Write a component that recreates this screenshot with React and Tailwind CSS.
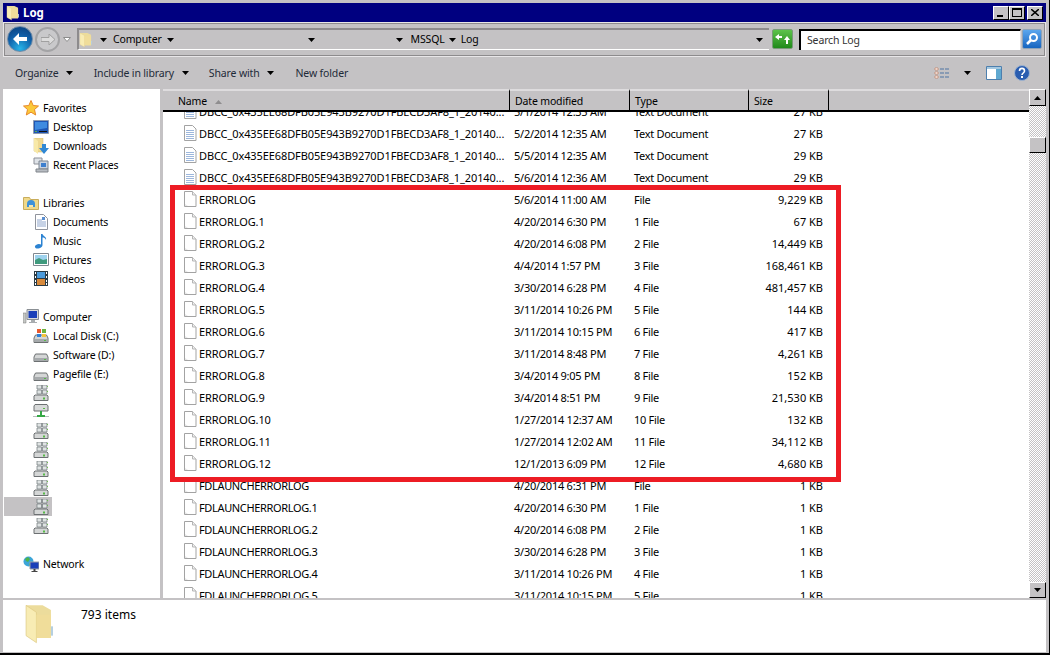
import React from "react";

const Arrow = ({ className = "" }) => (
    <svg width="7" height="4" viewBox="0 0 7 4" className={className}><path d="M0 0h7L3.500 4z" fill="#000" /></svg>
);

const Folder = ({ size = 14, h = 18 }) => (
    <svg width={size} height={h} viewBox="0 0 14 18" preserveAspectRatio="none" className="shrink-0">
        <path d="M1 1h8l4 2v12H3z" fill="#ecdc9c" />
        <path d="M1 1l5 3v13l-5-3z" fill="#f8ecb4" stroke="#dcc77f" strokeWidth=".3" />
        <path d="M6 5h7v10H6z" fill="#f0dd9a" />
        <path d="M13 10h1v4h-1z" fill="#b5cfe0" />
    </svg>
);

const FileIcon = () => (
    <svg width="14" height="16" viewBox="0 0 14 16" className="shrink-0">
        <path d="M1.500.5h8l3.500 3.500v11.500h-11.500z" fill="#fff" stroke="#a3a3a3" />
        <path d="M9.500.5v3.500h3.500" fill="#f0f0f0" stroke="#b5b5b5" />
        <path d="M2 13l3 2H2z" fill="#e6e6e6" />
    </svg>
);

const TextIcon = () => (
    <svg width="14" height="16" viewBox="0 0 14 16" className="shrink-0">
        <path d="M1.500.5h8l3.500 3.500v11.500h-11.500z" fill="#fff" stroke="#a3a3a3" />
        <path d="M3 5.500h8M3 7.500h8M3 9.500h8M3 11.500h8M3 13.500h8" stroke="#9db7dc" />
    </svg>
);

const Star = () => (
    <svg width="16" height="16" viewBox="0 0 16 16"><path d="M8 .5l2.200 5 5.300.500-4 3.500 1.200 5.500L8 12.200 3.300 15l1.200-5.500-4-3.500 5.300-.500z" fill="#fbc93b" stroke="#e8892b" /></svg>
);

const Desktop = () => (
    <svg width="16" height="14" viewBox="0 0 16 14"><path d="M.5.5h15v13H.5z" fill="#1f56b4" stroke="#8d9ab0" /><path d="M2 2h12v6L2 10z" fill="#3f8be0" /><path d="M6 11h8v1H6z" fill="#111" /><path d="M2 11h2v1H2z" fill="#5bb04b" /></svg>
);

const Downloads = () => (
    <svg width="16" height="16" viewBox="0 0 16 16"><path d="M1 0h9v14H4l-3-1z" fill="#eed892" stroke="#cdb66e" strokeWidth=".5" /><path d="M1 0l4 3v13l-4-3z" fill="#f8e9a8" /><path d="M9 6h4v4h3l-5 6-5-6h3z" fill="#2f87d4" /></svg>
);

const RecentPlaces = () => (
    <svg width="16" height="16" viewBox="0 0 16 16"><path d="M1 1h8v6H1z" fill="#dfe3e8" stroke="#8c9098" /><path d="M6 4h9v8H6z" fill="#c9d3e0" stroke="#7d8691" /><path d="M8 6h5v4H8z" fill="#3d7fce" /><path d="M3 12h12v3H3z" fill="#b7bcc2" stroke="#80858b" /></svg>
);

const Libraries = () => (
    <svg width="16" height="14" viewBox="0 0 16 14"><path d="M.5 1.500h6l1 2h8v10H.5z" fill="#f0d98a" stroke="#c9ad5c" /><path d="M4 8a4 4 0 018 0v3H4z" fill="#3f92d8" /><path d="M6 9h4v2H6z" fill="#f4e7b4" /></svg>
);

const Documents = () => (
    <svg width="13" height="16" viewBox="0 0 13 16"><path d="M.5.5h8l4 4v11H.5z" fill="#fff" stroke="#90949c" /><path d="M2 6h5M2 8h9M2 10h9M2 12h9" stroke="#8fa6cc" /><path d="M7 3h3v3H7z" fill="#5a8ed0" /></svg>
);

const Music = () => (
    <svg width="14" height="16" viewBox="0 0 14 16"><path d="M7 1h1.500c.5 2.500 4.500 2.500 3.500 6-.5-2-2.500-2.500-3.500-2.500V12c0 2-2.500 3.500-5 3.500S0 13.500 2 12s4-1 5-.5z" fill="#2c83d2" /></svg>
);

const Pictures = () => (
    <svg width="16" height="13" viewBox="0 0 16 13"><path d="M.5.5h15v12H.5z" fill="#fff" stroke="#808890" /><path d="M2 2h12v5H2z" fill="#9ed2ee" /><path d="M2 7l4-2 4 2 4-1v5H2z" fill="#3f9a7d" /></svg>
);

const Videos = () => (
    <svg width="14" height="15" viewBox="0 0 14 15"><path d="M0 0h14v15H0z" fill="#2b3b45" /><path d="M3 1h8v6H3z" fill="#4b9bdc" /><path d="M3 8h8v6H3z" fill="#d88a3c" /><path d="M1 1h1v2H1zM1 5h1v2H1zM1 9h1v2H1zM1 12h1v2H1zM12 1h1v2h-1zM12 5h1v2h-1zM12 9h1v2h-1zM12 12h1v2h-1z" fill="#fff" /></svg>
);

const Computer = () => (
    <svg width="16" height="15" viewBox="0 0 16 15"><path d="M0 4h3v10H0z" fill="#c6c9c6" stroke="#777" strokeWidth=".5" /><path d="M4 .5h11.500v10H4z" fill="#d7dadc" stroke="#8a8f94" /><path d="M5.500 2h8.500v7H5.500z" fill="#1a3fb8" /><path d="M8 11h4v2h2v1H6v-1h2z" fill="#a9adb0" /></svg>
);

const Drive = ({ windows }) => (
    <svg width="16" height="16" viewBox="0 0 16 16">
        <path d="M1 10l1.500-3h11L15 10v4.500H1z" fill="#d4d6d6" stroke="#6c7072" />
        <path d="M2 11h12v3H2z" fill="#a6aaac" />
        <path d="M11 12h2v1h-2z" fill="#57b948" />
        {windows && <path d="M4 1h4v4H4z" fill="#e9592e" />}
        {windows && <path d="M9 1h4v4H9z" fill="#6cb33f" />}
        {windows && <path d="M4 6h4v3H4z" fill="#2f7fd6" />}
        {windows && <path d="M9 6h4v3H9z" fill="#f5c33b" />}
    </svg>
);

const ServerDrive = () => (
    <svg width="16" height="16" viewBox="0 0 16 16">
        <path d="M4 0h4.500v4H4zM9.500 0H14v4H9.500zM4 5h4.500v4H4zM9.500 5H14v4H9.500z" fill="#dfe3e3" stroke="#6f7678" strokeWidth=".7" />
        <path d="M14 1h1v1h-1zM14 6h1v1h-1z" fill="#6cc04a" />
        <path d="M1 11l1-1h12l1 1v4.500H1z" fill="#d4d6d6" stroke="#6c7072" />
        <path d="M10 12.500h2v2h-2z" fill="#57b948" />
    </svg>
);

const NetDrive = () => (
    <svg width="16" height="16" viewBox="0 0 16 16">
        <path d="M1 2l1-1.500h12L15 2v5H1z" fill="#d8dada" stroke="#6c7072" />
        <path d="M10 4h2v1h-2z" fill="#57b948" />
        <path d="M7 7h2v4h3v2H4v-2h3z" fill="#35a845" />
        <path d="M0 12h4v1H0zM12 12h4v1h-4z" fill="#b7bcbc" />
    </svg>
);

const Network = () => (
    <svg width="16" height="16" viewBox="0 0 16 16"><circle cx="5.500" cy="5.500" r="5" fill="#3ba5d8" /><path d="M2 3l3-2 2 2-2 3-2-1zM7 7l2 1-1 2-2-1z" fill="#4fb34a" /><path d="M7 6h9v7H7z" fill="#1a3fb8" stroke="#9aa0a6" /><path d="M10.500 13h2v2h2v1h-6v-1h2z" fill="#444" /></svg>
);

const sideGroups = [
    { head: ["Favorites", <Star />], items: [["Desktop", <Desktop />], ["Downloads", <Downloads />], ["Recent Places", <RecentPlaces />]] },
    { head: ["Libraries", <Libraries />], items: [["Documents", <Documents />], ["Music", <Music />], ["Pictures", <Pictures />], ["Videos", <Videos />]] },
    {
        head: ["Computer", <Computer />],
        items: [
            ["Local Disk (C:)", <Drive windows />],
            ["Software (D:)", <Drive />],
            ["Pagefile (E:)", <Drive />],
            ["", <ServerDrive />],
            ["", <NetDrive />],
            ["", <ServerDrive />],
            ["", <ServerDrive />],
            ["", <ServerDrive />],
            ["", <ServerDrive />],
            ["", <ServerDrive />, true],
            ["", <ServerDrive />],
        ],
    },
    { head: ["Network", <Network />], items: [] },
];

const dbcc = "DBCC_0x435EE68DFB05E943B9270D1FBECD3AF8_1_20140...";

const files = [
    [dbcc, "5/1/2014 12:35 AM", "Text Document", "27 KB", true],
    [dbcc, "5/2/2014 12:35 AM", "Text Document", "27 KB", true],
    [dbcc, "5/5/2014 12:35 AM", "Text Document", "29 KB", true],
    [dbcc, "5/6/2014 12:36 AM", "Text Document", "29 KB", true],
    ["ERRORLOG", "5/6/2014 11:00 AM", "File", "9,229 KB"],
    ["ERRORLOG.1", "4/20/2014 6:30 PM", "1 File", "67 KB"],
    ["ERRORLOG.2", "4/20/2014 6:08 PM", "2 File", "14,449 KB"],
    ["ERRORLOG.3", "4/4/2014 1:57 PM", "3 File", "168,461 KB"],
    ["ERRORLOG.4", "3/30/2014 6:28 PM", "4 File", "481,457 KB"],
    ["ERRORLOG.5", "3/11/2014 10:26 PM", "5 File", "144 KB"],
    ["ERRORLOG.6", "3/11/2014 10:15 PM", "6 File", "417 KB"],
    ["ERRORLOG.7", "3/11/2014 8:48 PM", "7 File", "4,261 KB"],
    ["ERRORLOG.8", "3/4/2014 9:05 PM", "8 File", "152 KB"],
    ["ERRORLOG.9", "3/4/2014 8:51 PM", "9 File", "21,530 KB"],
    ["ERRORLOG.10", "1/27/2014 12:37 AM", "10 File", "132 KB"],
    ["ERRORLOG.11", "1/27/2014 12:02 AM", "11 File", "34,112 KB"],
    ["ERRORLOG.12", "12/1/2013 6:09 PM", "12 File", "4,680 KB"],
    ["FDLAUNCHERRORLOG", "4/20/2014 6:31 PM", "File", "1 KB"],
    ["FDLAUNCHERRORLOG.1", "4/20/2014 6:30 PM", "1 File", "1 KB"],
    ["FDLAUNCHERRORLOG.2", "4/20/2014 6:08 PM", "2 File", "1 KB"],
    ["FDLAUNCHERRORLOG.3", "3/30/2014 6:28 PM", "3 File", "1 KB"],
    ["FDLAUNCHERRORLOG.4", "3/11/2014 10:26 PM", "4 File", "1 KB"],
    ["FDLAUNCHERRORLOG.5", "3/11/2014 10:15 PM", "5 File", "1 KB"],
];

const raised = "border-t border-l border-t-white border-l-white border-r border-b border-r-black border-b-black";

// Tahoma's lowercase runs narrower than Noto Sans
const narrow = "text-[10.5px] tracking-[-0.15px]";

const WinButton = ({ children, className = "" }) => (
    <div className={`w-[16px] h-[14px] bg-[#c4c2c4] flex items-center justify-center ${raised} ${className}`}>{children}</div>
);

const HeaderCell = ({ label, className = "", children }) => (
    <div className={`h-full flex items-center gap-2 pl-[4px] pt-[2px] border-t-2 border-t-[#dedcde] border-r border-r-black ${narrow} ${className}`}>
        <span>{label}</span>
        {children}
    </div>
);

const SideRow = ({ label, icon, head, selected }) => (
    <div className="h-[19px] flex items-center">
        <div className={`h-[19px] ml-[1px] flex items-center ${head ? "pl-[19px]" : "pl-[29px]"} ${selected ? "bg-[#c4c2c4] w-[48px]" : ""}`}>
            <div className="w-[16px] h-[16px] flex items-center justify-center shrink-0">{icon}</div>
        </div>
        {label && <span className="ml-[4px] pt-[2px]">{label}</span>}
    </div>
);

export default function App() {
    return (
        <div className="relative w-[1050px] h-[655px] overflow-hidden flex flex-col bg-[#c4c2c4] text-[11px] leading-none text-black font-['Noto_Sans',sans-serif] pt-[3px] pl-[3px] pr-[3px] border-r border-b-2 border-black">
            {/* Title bar */}
            <div className="h-[19px] shrink-0 bg-[#000080] flex items-center pl-[3px] pr-[3px] text-white font-bold text-[11.5px]">
                <Folder size={13} h={16} />
                <span className="ml-[4px]">Log</span>
                <div className="ml-auto flex items-center">
                    <WinButton><span className="w-[6px] h-[2px] bg-black mt-[7px] mr-[3px]"></span></WinButton>
                    <WinButton><span className="w-[10px] h-[9px] border border-black border-t-2"></span></WinButton>
                    <WinButton className="ml-[2px]">
                        <svg width="8" height="7" viewBox="0 0 8 7"><path d="M0 0l8 7M8 0L0 7" stroke="#000" strokeWidth="1.500" /></svg>
                    </WinButton>
                </div>
            </div>

            {/* Address bar */}
            <div className={`h-[35px] shrink-0 border border-[#e8e6e8] outline outline-[#8d8b8d] -outline-offset-[2px] flex items-center pb-[1px] pl-[3px] pr-[3px] ${narrow}`}>
                <div className="w-[26px] h-[26px] rounded-full bg-[radial-gradient(circle_at_50%_90%,#27b4e8,#0f5da6_55%,#0a3d78)] border border-[#6e8ba8] flex items-center justify-center shrink-0">
                    <svg width="16" height="12" viewBox="0 0 16 12"><path d="M7 0L1 6l6 6V8h8V4H7z" fill="#fff" /></svg>
                </div>
                <div className="w-[25px] h-[25px] ml-[2px] rounded-full bg-[#c9c9cb] border-2 border-[#a3a3a5] flex items-center justify-center shrink-0">
                    <svg width="14" height="11" viewBox="0 0 14 11"><path d="M8 0l6 5.500L8 11V7.500H0v-4h8z" fill="#dcdcdc" stroke="#a0a0a0" /></svg>
                </div>
                <svg width="8" height="5" viewBox="0 0 8 5" className="ml-[3px] shrink-0"><path d="M.5.5h7L4 4.500z" fill="#fff" stroke="#8c8c8c" /></svg>
                <div className="w-[692px] h-[22px] ml-[6px] flex items-center border-t-2 border-l-2 border-t-[#8d8b8d] border-l-[#8d8b8d] border-b border-b-white shrink-0">
                    <Folder size={13} h={16} />
                    <Arrow className="ml-[8px]" />
                    <span className="ml-[6px]">Computer</span>
                    <Arrow className="ml-[5px]" />
                    <Arrow className="ml-[134px]" />
                    <Arrow className="ml-[81px]" />
                    <span className="ml-[8px]">MSSQL</span>
                    <Arrow className="ml-[4px]" />
                    <span className="ml-[5px]">Log</span>
                    <Arrow className="ml-auto mr-[6px]" />
                </div>
                <div className="w-[21px] h-[20px] ml-[3px] rounded-[2px] bg-gradient-to-b from-[#5cc34a] to-[#1f8a1a] border border-[#7a9a7a] flex items-center justify-center shrink-0">
                    <svg width="15" height="10" viewBox="0 0 15 10"><path d="M0 3l4-3v2h3v2H4v2zM15 6l-3-4-3 4h2v4h2V6z" fill="#fff" /></svg>
                </div>
                <div className="w-[222px] h-[21px] ml-[6px] bg-white border-t-2 border-l-2 border-black border-r border-r-[#dedcde] pl-[6px] flex items-center text-[#333] shrink-0">Search Log</div>
                <div className="w-[20px] h-[20px] ml-[1px] rounded-[2px] bg-gradient-to-b from-[#5aa6ee] to-[#1565c0] border border-[#8fa3b8] flex items-center justify-center shrink-0">
                    <svg width="14" height="14" viewBox="0 0 14 14"><circle cx="8.500" cy="5.500" r="3.500" fill="none" stroke="#fff" strokeWidth="2" /><path d="M6 8l-4 4" stroke="#fff" strokeWidth="2.500" /></svg>
                </div>
            </div>

            {/* Command bar */}
            <div className={`h-[32px] shrink-0 flex items-center pl-[12px] pr-[16px] text-[#1e2a38] ${narrow}`}>
                <span>Organize</span>
                <Arrow className="ml-[7px]" />
                <span className="ml-[21px]">Include in library</span>
                <Arrow className="ml-[8px]" />
                <span className="ml-[20px]">Share with</span>
                <Arrow className="ml-[7px]" />
                <span className="ml-[22px]">New folder</span>
                <svg width="16" height="12" viewBox="0 0 16 12" className="ml-auto">
                    <path d="M1 1h3v2H1zM1 5h3v2H1zM1 9h3v2H1z" fill="#fff" stroke="#c0704d" strokeWidth=".6" />
                    <path d="M6 2h10M6 6h10M6 10h10" stroke="#4f74a3" strokeDasharray="4 1" />
                </svg>
                <Arrow className="ml-[14px]" />
                <svg width="16" height="14" viewBox="0 0 16 14" className="ml-[15px]">
                    <path d="M.5.5h15v13H.5z" fill="#fff" stroke="#4d7fae" />
                    <path d="M1 1h14v2H1z" fill="#a5c8e0" />
                    <path d="M10 3h5v10h-5z" fill="#5fa8d0" />
                </svg>
                <svg width="16" height="16" viewBox="0 0 16 16" className="ml-[12px]">
                    <circle cx="8" cy="8" r="7.500" fill="#2a5db0" stroke="#9db2cf" />
                    <path d="M5.500 6c0-3.500 5-3.500 5 0 0 2-2.500 2-2.500 4" fill="none" stroke="#fff" strokeWidth="1.600" />
                    <path d="M7 11h2v2H7z" fill="#fff" />
                </svg>
            </div>

            {/* Main */}
            <div className="flex-1 min-h-0 flex">
                <div className={`w-[157px] shrink-0 bg-white pt-[9px] overflow-hidden ${narrow}`}>
                    {sideGroups.map((group, i) => (
                        <div key={i} className="mb-[19px]">
                            <SideRow label={group.head[0]} icon={group.head[1]} head />
                            {group.items.map((item, j) => (
                                <SideRow key={j} label={item[0]} icon={item[1]} selected={item[2]} />
                            ))}
                        </div>
                    ))}
                </div>

                <div className="flex-1 min-w-0 ml-[3px] flex flex-col">
                    {/* Column headers + scrollbar */}
                    <div className="flex-1 min-h-0 flex">
                        <div className="flex-1 min-w-0 flex flex-col">
                            <div className="h-[23px] shrink-0 flex border-b-2 border-b-black">
                                <HeaderCell label="Name" className="w-[347px] pl-[15px]">
                                    <svg width="7" height="4" viewBox="0 0 7 4"><path d="M3.500 0L7 4H0z" fill="#8f8d8f" /></svg>
                                </HeaderCell>
                                <HeaderCell label="Date modified" className="w-[120px] pl-[5px]" />
                                <HeaderCell label="Type" className="w-[119px] pl-[5px]" />
                                <HeaderCell label="Size" className="w-[80px] pl-[5px]" />
                                <HeaderCell label="" className="flex-1 border-r-0" />
                            </div>
                            <div className="flex-1 min-h-0 overflow-hidden bg-white">
                                <div className="-mt-[12px]">
                                    {files.map((f, i) => (
                                        <div key={i} className="h-[22px] flex items-center">
                                            <div className="w-[347px] pl-[20px] flex items-center shrink-0">
                                                {f[4] ? <TextIcon /> : <FileIcon />}
                                                <span className={`ml-[2px] whitespace-nowrap ${i >= 17 ? "tracking-[-0.35px]" : "tracking-[-0.1px]"}`}>{f[0]}</span>
                                            </div>
                                            <div className="w-[120px] pl-[4px] shrink-0 whitespace-nowrap tracking-[-0.25px]">{f[1]}</div>
                                            <div className="w-[119px] pl-[4px] shrink-0 whitespace-nowrap tracking-[-0.3px]">{f[2]}</div>
                                            <div className="w-[74px] text-right shrink-0 whitespace-nowrap">{f[3]}</div>
                                        </div>
                                    ))}
                                </div>
                            </div>
                        </div>
                        <div className="w-[17px] shrink-0 flex flex-col bg-[repeating-conic-gradient(#c4c2c4_0_25%,#ffffff_0_50%)] bg-[length:2px_2px]">
                            <div className={`h-[17px] bg-[#c4c2c4] flex items-center justify-center ${raised}`}>
                                <svg width="7" height="4" viewBox="0 0 7 4"><path d="M3.500 0L7 4H0z" fill="#000" /></svg>
                            </div>
                            <div className={`h-[16px] mt-[31px] bg-[#c4c2c4] ${raised}`}></div>
                            <div className={`h-[16px] mt-auto bg-[#c4c2c4] flex items-center justify-center ${raised}`}>
                                <Arrow />
                            </div>
                        </div>
                    </div>
                </div>
            </div>

            {/* Details pane */}
            <div className="h-[52px] shrink-0 mt-[2px] mb-[1px] bg-white flex items-start pl-[21px] text-[12px]">
                <div className="mt-[3px]"><Folder size={29} h={42} /></div>
                <span className="ml-[28px] mt-[9px]">793 items</span>
            </div>

            {/* Red annotation around the ERRORLOG files */}
            <div className="absolute left-[170px] top-[185px] w-[671px] h-[297px] border-[5px] border-[#ed1c24]"></div>
        </div>
    );
}
